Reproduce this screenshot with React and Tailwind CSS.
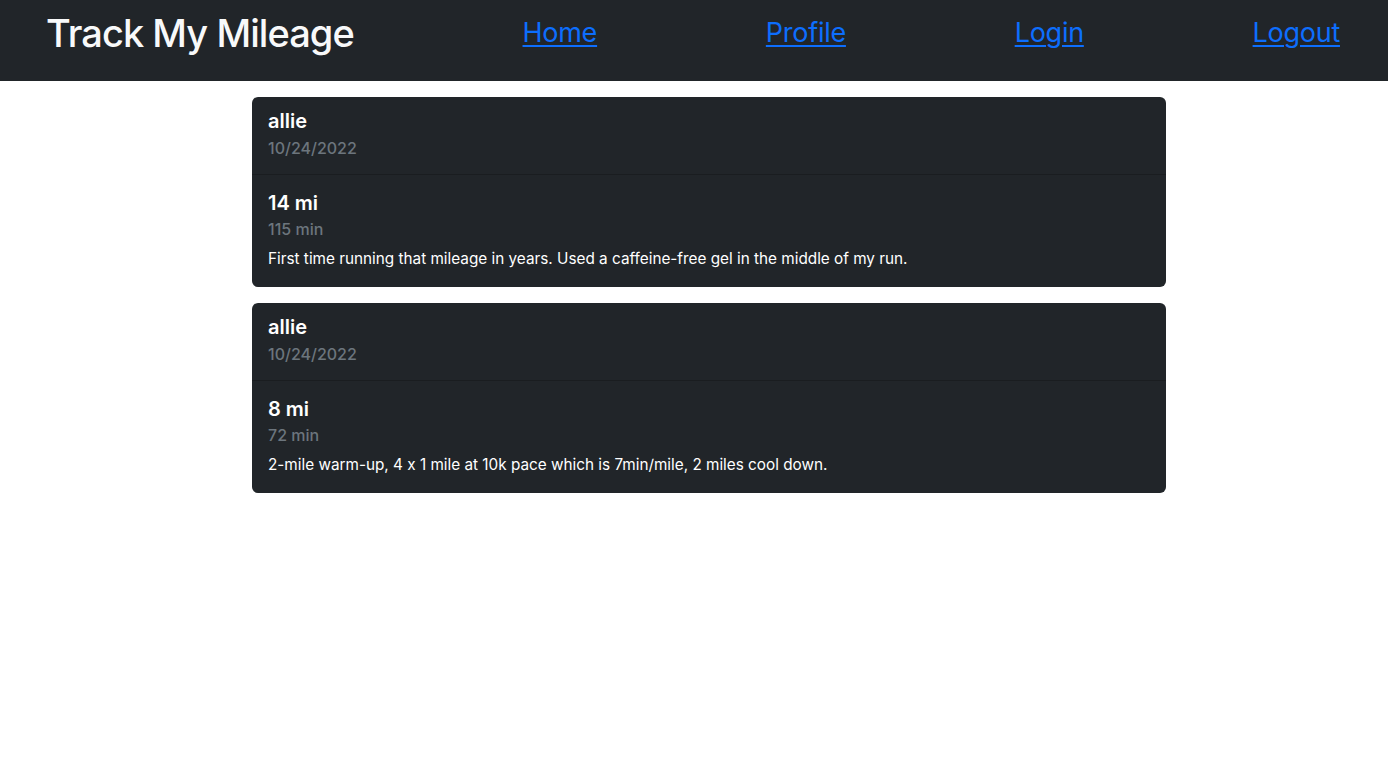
import React from "react";

const entries = [
  {
    name: "allie",
    date: "10/24/2022",
    miles: "14 mi",
    mins: "115 min",
    notes: "First time running that mileage in years. Used a caffeine-free gel in the middle of my run.",
  },
  {
    name: "allie",
    date: "10/24/2022",
    miles: "8 mi",
    mins: "72 min",
    notes: "2-mile warm-up, 4 x 1 mile at 10k pace which is 7min/mile, 2 miles cool down.",
  },
];

export default function App() {
  return (
    <div
      className="min-h-[761px] bg-white [font-feature-settings:'calt'_0]"
      style={{ fontFamily: "Inter, 'Noto Sans', sans-serif" }}
    >
      <nav className="h-[81px] bg-[#212529] flex items-center justify-between pl-[46px] pr-[48px] pb-[15px]">
        <h1 className="text-[38px] leading-[48px] font-medium text-[#f8f9fa] tracking-[-0.025em]">Track My Mileage</h1>
        <a href="#" className="text-[27px] leading-[34px] text-[#0d6efd] underline underline-offset-[3px] decoration-2 tracking-[-0.01em]">Home</a>
        <a href="#" className="text-[27px] leading-[34px] text-[#0d6efd] underline underline-offset-[3px] decoration-2 tracking-[-0.01em]">Profile</a>
        <a href="#" className="text-[27px] leading-[34px] text-[#0d6efd] underline underline-offset-[3px] decoration-2 tracking-[-0.01em]">Login</a>
        <a href="#" className="text-[27px] leading-[34px] text-[#0d6efd] underline underline-offset-[3px] decoration-2 tracking-[-0.01em]">Logout</a>
      </nav>
      <div className="ml-[252px] w-[914px] pt-4 flex flex-col gap-4">
        {entries.map((e, i) => (
          <div key={i} className="bg-[#212529] rounded-md text-white">
            <div className="px-4 pt-3 pb-[16px] border-b border-[#1a1d20]">
              <div className="text-[20px] leading-[24px] font-semibold">{e.name}</div>
              <div className="mt-[6px] text-[16px] leading-[19px] font-medium text-[#6c757d]">{e.date}</div>
            </div>
            <div className="px-4 pt-4 pb-[16px]">
              <div className="text-[20px] leading-[24px] font-semibold">{e.miles}</div>
              <div className="mt-[5px] text-[16px] leading-[19px] font-medium text-[#6c757d]">{e.mins}</div>
              <p className="mt-[8px] text-[15.3px] leading-[24px]">{e.notes}</p>
            </div>
          </div>
        ))}
      </div>
    </div>
  );
}
